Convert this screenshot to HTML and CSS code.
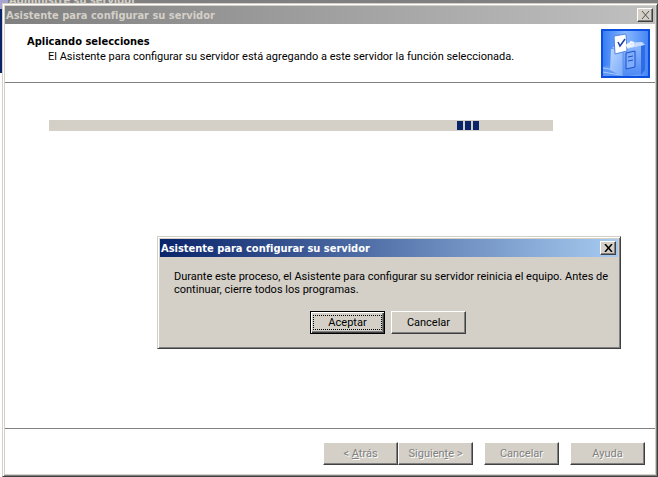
FILE: index.html
```html
<!DOCTYPE html>
<html lang="es">
<head>
<meta charset="UTF-8">
<meta name="viewport" content="width=device-width, initial-scale=1.0">
<title>Asistente para configurar su servidor</title>
<link rel="stylesheet" href="styles.css">
</head>
<body>

<div class="fondo">
    <div class="fondo-titulo">Administre su servidor</div>
    <div class="fondo-panel"></div>
</div>

<main class="ventana">
    <header class="titulo inactivo">
        <h1>Asistente para configurar su servidor</h1>
        <button type="button" class="cerrar" aria-label="Cerrar" disabled>
            <svg width="9" height="8" viewBox="0 0 9 8"><path d="M1 0l7 8M8 0L1 8"/></svg>
        </button>
    </header>

    <section class="cabecera">
        <div class="textos">
            <h2>Aplicando selecciones</h2>
            <p>El Asistente para configurar su servidor está agregando a este servidor la función seleccionada.</p>
        </div>
        <svg class="icono" width="49" height="49" viewBox="0 0 49 49">
            <defs>
                <linearGradient id="azul" x1="0" y1="0" x2="1" y2="0">
                    <stop offset="0" stop-color="#2f78f3"/>
                    <stop offset=".5" stop-color="#8ab8ff"/>
                    <stop offset="1" stop-color="#3f82f5"/>
                </linearGradient>
                <linearGradient id="lado" x1="0" y1="0" x2="1" y2="1">
                    <stop offset="0" stop-color="#b9d5ff"/>
                    <stop offset="1" stop-color="#7aaafa"/>
                </linearGradient>
                <linearGradient id="frente" x1="0" y1="0" x2="0" y2="1">
                    <stop offset="0" stop-color="#8ab6ff"/>
                    <stop offset="1" stop-color="#4c88f3"/>
                </linearGradient>
            </defs>
            <rect width="49" height="49" fill="url(#azul)"/>
            <path d="M1 38l9-2 12 4v9H1z" fill="#5c96f6"/>
            <path d="M2 39l18 3M2 43l17 3" stroke="#a9ccff" fill="none"/>
            <path d="M10 20l12 1v27L9 41z" fill="url(#lado)"/>
            <path d="M11 19l11-5 19-1 3 3-22 5z" fill="#c6dcff"/>
            <path d="M22 21l18-4v28l-18 3z" fill="url(#frente)"/>
            <path d="M22 21v27" stroke="#5a90ee"/>
            <path d="M40 17l4-1v25l-4 5z" fill="#2f6be4"/>
            <path d="M25 24l9-2v16l-9 2z" fill="#7eadfb" stroke="#1d4fc8"/>
            <path d="M27 28l5-1M27 32l5-1" stroke="#1d4fc8"/>
            <path d="M13 7l12-2 1 17-12 3z" fill="#fff" stroke="#4f83e3"/>
            <path d="M17 13l2 4 5-7" stroke="#1c3fa8" stroke-width="1.5" fill="none"/>
            <path d="M24 17l5-2 1-2 3 1M26 18l7-2" stroke="#eef5ff" stroke-width="2" fill="none"/>
            <rect x="1" y="1" width="47" height="47" fill="none" stroke="#0a4fe0" stroke-width="2"/>
        </svg>
    </section>

    <section class="contenido">
        <div class="progreso" role="progressbar" aria-label="Aplicando selecciones">
            <span></span><span></span><span></span>
        </div>
    </section>

    <footer class="pie">
        <div class="grupo">
            <button type="button" class="boton" disabled>&lt; <u>A</u>trás</button>
            <button type="button" class="boton" disabled>Siguien<u>t</u>e &gt;</button>
        </div>
        <button type="button" class="boton" disabled>Cancelar</button>
        <button type="button" class="boton" disabled>Ayuda</button>
    </footer>
</main>

<div class="dialogo" role="dialog" aria-labelledby="tituloDialogo">
    <header class="titulo activo">
        <h2 id="tituloDialogo">Asistente para configurar su servidor</h2>
        <button type="button" class="cerrar" aria-label="Cerrar">
            <svg width="9" height="8" viewBox="0 0 9 8"><path d="M1 0l7 8M8 0L1 8"/></svg>
        </button>
    </header>
    <p class="mensaje">Durante este proceso, el Asistente para configurar su servidor reinicia el equipo. Antes de continuar, cierre todos los programas.</p>
    <div class="acciones">
        <button type="button" class="boton predeterminado"><span>Aceptar</span></button>
        <button type="button" class="boton">Cancelar</button>
    </div>
</div>

</body>
</html>
```
FILE: styles.css
```css
* {
    box-sizing: border-box;
}
body {
    margin: 0;
    padding: 3px 0 0 2px;
    height: 100vh;
    overflow: hidden;
    background-color: #fff;
    color: #000;
    font-family: Tahoma, Roboto, sans-serif;
    font-size: 11px;
    line-height: 13px;
}
h1, h2, p {
    margin: 0;
    font-size: 11px;
}
h1, h2, .fondo-titulo {
    font-family: Tahoma, "DejaVu Sans Condensed", "DejaVu Sans", sans-serif;
}
button {
    font: inherit;
    padding: 0;
}

/* ventana que queda detrás */
.fondo {
    position: absolute;
    top: 0;
    left: 0;
    right: 0;
    height: 73px;
    overflow: hidden;
    background-color: #808080;
}
.fondo-titulo {
    height: 9px;
    padding-left: 9px;
    line-height: 1px;
    font-weight: bold;
    color: #d4d0c8;
    background: linear-gradient(to right, #a8a4d0 8px, #808080 8px);
}
.fondo-panel {
    height: 64px;
    background-color: #0a246a;
}

.ventana {
    position: relative;
    display: flex;
    flex-direction: column;
    height: 100%;
    background-color: #fff;
    border: 1px solid;
    border-color: #d4d0c8 #404040 #404040 #d4d0c8;
    box-shadow: inset 1px 1px #fff, inset -1px -1px #808080, inset 2px 2px #d4d0c8, inset -2px -2px #d4d0c8;
    padding: 2px;
}
.titulo {
    display: flex;
    align-items: center;
    justify-content: space-between;
    height: 18px;
    padding: 0 2px 0 1px;
    flex-shrink: 0;
}
.inactivo {
    color: #d4d0c8;
    background: linear-gradient(to right, #808080, #c0c0c0);
}
.activo {
    color: #fff;
    background: linear-gradient(to right, #0a246a, #a6caf0);
}
.cerrar {
    display: flex;
    align-items: center;
    justify-content: center;
    width: 16px;
    height: 14px;
    background-color: #d4d0c8;
    border: 1px solid;
    border-color: #fff #404040 #404040 #fff;
    box-shadow: inset -1px -1px #808080;
}
.cerrar svg {
    fill: none;
    stroke: #000;
    stroke-width: 1.5;
}
.inactivo .cerrar svg {
    stroke: #505050;
    stroke-width: 1;
}

.cabecera {
    display: flex;
    justify-content: space-between;
    height: 59px;
    padding: 5px 5px 0 22px;
    border-bottom: 1px solid #808080;
}
.textos {
    padding-top: 6px;
}
.textos p {
    padding: 2px 0 0 21px;
}
.contenido {
    flex: 1;
    padding: 37px 102px 0 44px;
}
.progreso {
    display: flex;
    gap: 2px;
    height: 11px;
    padding: 1px 0 1px 81%;
    background-color: #d4d0c8;
}
.progreso span {
    width: 6px;
    background-color: #0a246a;
}

.pie {
    display: flex;
    justify-content: flex-end;
    gap: 11px;
    height: 46px;
    padding: 13px 10px 0 0;
    border-top: 1px solid #808080;
}
.grupo {
    display: flex;
}
.boton {
    width: 75px;
    height: 23px;
    color: #000;
    background-color: #d4d0c8;
    border: 1px solid;
    border-color: #fff #404040 #404040 #fff;
    box-shadow: inset -1px -1px #808080;
}
.boton:disabled {
    color: #808080;
    text-shadow: 1px 1px #fff;
}

.dialogo {
    position: absolute;
    top: 236px;
    left: 157px;
    width: 464px;
    background-color: #d4d0c8;
    border: 1px solid;
    border-color: #d4d0c8 #404040 #404040 #d4d0c8;
    box-shadow: inset 1px 1px #fff, inset -1px -1px #808080;
    padding: 2px;
}
.mensaje {
    padding: 13px 4px 0 14px;
}
.acciones {
    display: flex;
    justify-content: center;
    gap: 6px;
    padding: 15px 2px 12px 0;
}
.predeterminado {
    padding: 2px;
    border-color: #000;
    box-shadow: inset 1px 1px #fff, inset -1px -1px #404040, inset -2px -2px #808080;
}
.predeterminado span {
    display: block;
    border: 1px dotted #000;
}
```
